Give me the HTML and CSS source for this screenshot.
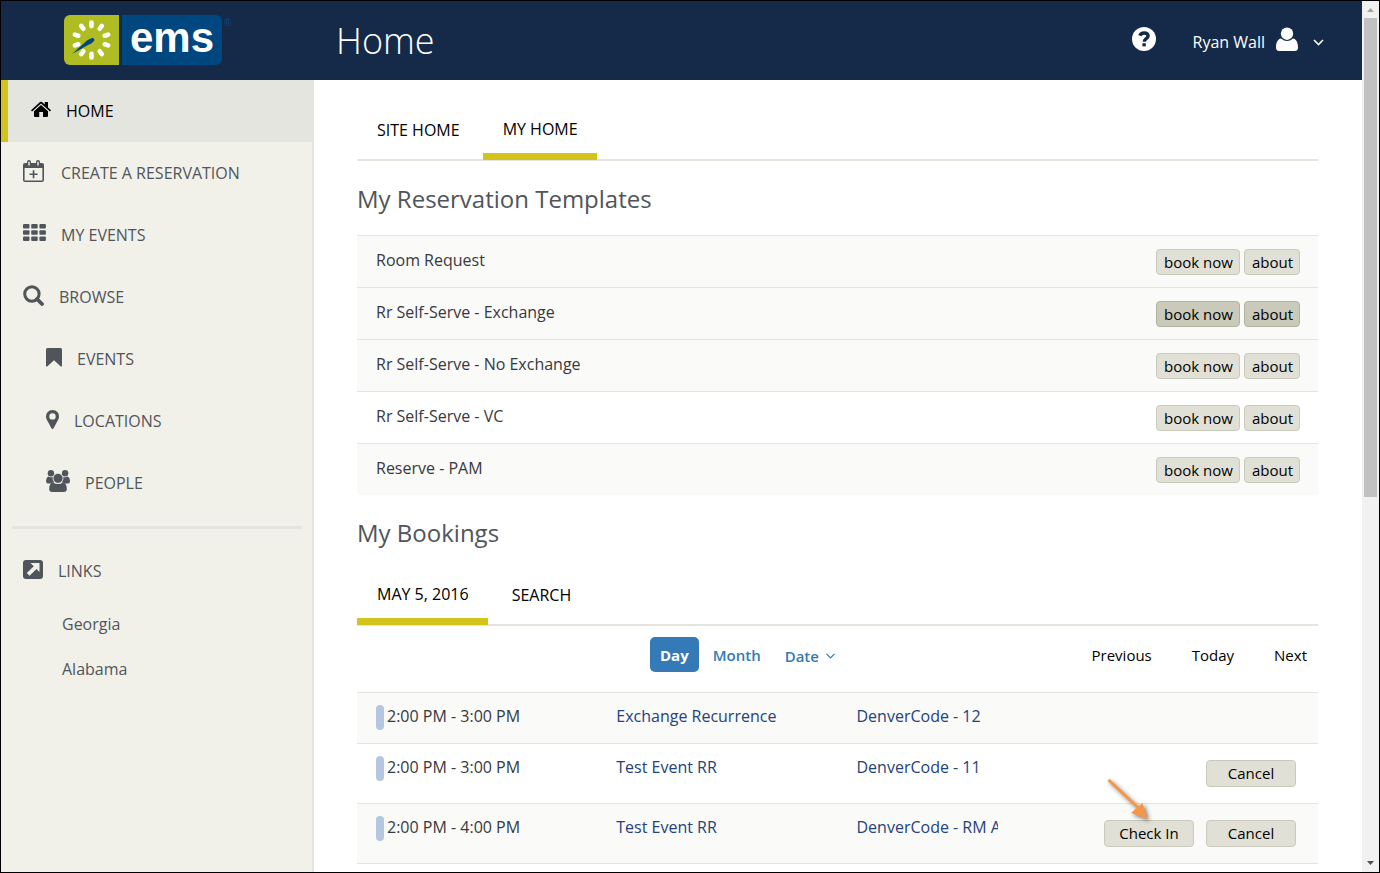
FILE: index.html
```html
<!DOCTYPE html>
<html lang="en">
<head>
<meta charset="utf-8">
<title>Home</title>
<link rel="stylesheet" href="styles.css">
</head>
<body>
<div class="window">
  <div class="app">
    <header class="header">
      <a class="logo" href="#" aria-label="ems">
        <svg width="170" height="52" viewBox="0 0 170 52">
          <path d="M7 1H56V51H7a6 6 0 0 1-6-6V7a6 6 0 0 1 6-6z" fill="#afbd22"/>
          <path d="M59 1H153a6 6 0 0 1 6 6V45a6 6 0 0 1-6 6H59z" fill="#00467f"/>
          <g stroke="#fff" stroke-width="4.6" stroke-linecap="round">
            <path id="ray" d="M28.500 8.500v3.600"/>
            <use href="#ray" transform="rotate(36 28.500 26)"/>
            <use href="#ray" transform="rotate(72 28.500 26)"/>
            <use href="#ray" transform="rotate(108 28.500 26)"/>
            <use href="#ray" transform="rotate(144 28.500 26)"/>
            <use href="#ray" transform="rotate(180 28.500 26)"/>
            <use href="#ray" transform="rotate(216 28.500 26)"/>
            <use href="#ray" transform="rotate(252 28.500 26)"/>
            <use href="#ray" transform="rotate(288 28.500 26)"/>
            <use href="#ray" transform="rotate(324 28.500 26)"/>
          </g>
          <path d="M9 40 24 26.500Q28 23.500 30 24Q32.500 25.500 30.500 27.500Q29 29.500 25 31z" fill="#00467f"/>
          <text class="logo-word" x="67" y="38">ems</text>
          <text class="logo-mark" x="161" y="12">®</text>
        </svg>
      </a>
      <h1 class="title">Home</h1>
      <div class="user-area">
        <button class="icon-button" aria-label="Help">
          <svg width="24" height="24" viewBox="0 0 24 24"><circle cx="12" cy="12" r="12" fill="#fff"/><path d="M7.800 8.600C8.600 6.700 10.100 6 12 6c2.500 0 4.100 1.300 4.100 3.100 0 2.600-3.900 2.700-3.900 5.600" fill="none" stroke="#152948" stroke-width="3.400"/><path d="M10.400 16.200h3.400v3.200h-3.400z" fill="#152948"/></svg>
        </button>
        <button class="user-button">Ryan Wall
          <svg width="22" height="25" viewBox="0 0 22 25" fill="#fff"><circle cx="11" cy="6.700" r="6.200"/><path d="M5 11.500Q11 16.500 17 11.500C20.500 12 22 16 22 20.500Q22 24 18.500 24H3.500Q0 24 0 20.500C0 16 1.500 12 5 11.500z"/></svg>
          <svg class="user-caret" width="11" height="7" viewBox="0 0 11 7"><path d="M1 1l4.500 4.500L10 1" fill="none" stroke="#fff" stroke-width="1.600"/></svg>
        </button>
      </div>
    </header>
    <div class="body">
      <nav class="sidebar">
        <a class="nav-item active" href="#"><svg width="20" height="17" viewBox="0 0 20 17"><path d="M0 9.300 9 1.100q1-.8 2 0l2.800 2.500V1H17v5.500l3 2.800-1 1.200-9-7.900-9 7.900z"/><path d="M3 10.200l7-6.200 7 6.200V15q0 1-1 1h-4v-5H8.200v5H4q-1 0-1-1z"/></svg>HOME</a>
        <a class="nav-item" href="#"><svg width="23" height="23" viewBox="0 0 23 23"><path fill-rule="evenodd" d="M2 3h2V2q0-2 2-2t2 2v1h5V2q0-2 2-2t2 2v1h2q2 0 2 2v15q0 2-2 2H2q-2 0-2-2V5q0-2 2-2zM1.600 8v12q0 .5.500.5h16.800q.500 0 .500-.5V8zM5.300 2v3.500h1.400V2q-.7-1-1.400 0zM14.300 2v3.500h1.400V2q-.7-1-1.400 0z"/><path d="M9.700 10.300h1.700v3.200h3.200v1.600h-3.200v3.200H9.700v-3.200H6.500v-1.600h3.200z"/></svg>CREATE A RESERVATION</a>
        <a class="nav-item" href="#"><svg class="raised" width="23" height="17" viewBox="0 0 23 17"><g id="gridrow"><rect width="6.500" height="4.600" rx="1"/><rect x="8.200" width="6.500" height="4.600" rx="1"/><rect x="16.400" width="6.500" height="4.600" rx="1"/></g><use href="#gridrow" y="6.200"/><use href="#gridrow" y="12.400"/></svg>MY EVENTS</a>
        <a class="nav-item" href="#"><svg width="21" height="21" viewBox="0 0 21 21" fill="none" stroke="#50555c"><circle cx="8.900" cy="9" r="7.200" stroke-width="3"/><path d="M14 14l5 5" stroke-width="3.800" stroke-linecap="round"/></svg>BROWSE</a>
        <a class="nav-item sub" href="#"><svg width="16" height="19" viewBox="0 0 16 19"><path d="M0 1.500Q0 0 1.500 0h13Q16 0 16 1.500V18q-.5 1-1.500.3L8 12.300l-6.500 6Q.5 19 0 18z"/></svg>EVENTS</a>
        <a class="nav-item sub" href="#"><svg width="13" height="19" viewBox="0 0 13 19"><path fill-rule="evenodd" d="M6.500 0Q13 .5 13 6.500q0 1.500-.6 2.800L7.600 18.200q-1.100 1.500-2.200 0L.6 9.300Q0 8 0 6.500.2.500 6.500 0zM6.500 3.200a3.200 3.200 0 1 0 0 6.400 3.200 3.200 0 1 0 0-6.400z"/></svg>LOCATIONS</a>
        <a class="nav-item sub" href="#"><svg width="24" height="22" viewBox="0 0 24 22"><circle cx="4.900" cy="3.200" r="3.200"/><circle cx="19.100" cy="3.200" r="3.200"/><path d="M2 6.500q3 1.300 4.700.2-.4 3.800 1.600 5.800-2.500 0-3.300 1H2Q0 13.500 0 11 0 8 2 6.500zM22 6.500q-3 1.300-4.700.2.400 3.800-1.600 5.800 2.500 0 3.300 1h3q2 0 2-2.500 0-3-2-4.500z"/><circle cx="12" cy="8.300" r="4.900" stroke="#f2f1e9" stroke-width=".6"/><path d="M7 12.500q5 3 10 0 3.800.5 3.800 6.500 0 3-3 3H6.200q-3 0-3-3 0-6 3.800-6.500z"/></svg>PEOPLE</a>
        <hr class="divider">
        <a class="nav-item" href="#"><svg width="20" height="19" viewBox="0 0 20 19"><rect width="20" height="19" rx="3"/><path d="M7.500 3H16.500V12L13.500 9 6.500 15.800 3.800 13 10.800 6.200z" fill="#f2f1e9"/></svg>LINKS</a>
        <a class="nav-link" href="#">Georgia</a>
        <a class="nav-link" href="#">Alabama</a>
      </nav>
      <main class="main">
        <div class="tabs">
          <button class="tab">SITE HOME</button>
          <button class="tab selected">MY HOME</button>
        </div>
        <h2 class="section-title">My Reservation Templates</h2>
        <table class="list templates">
          <tbody>
            <tr class="shaded"><td>Room Request</td><td class="actions"><button class="btn">book now</button><button class="btn">about</button></td></tr>
            <tr class="shaded hover"><td>Rr Self-Serve - Exchange</td><td class="actions"><button class="btn">book now</button><button class="btn">about</button></td></tr>
            <tr class="shaded"><td>Rr Self-Serve - No Exchange</td><td class="actions"><button class="btn">book now</button><button class="btn">about</button></td></tr>
            <tr><td>Rr Self-Serve - VC</td><td class="actions"><button class="btn">book now</button><button class="btn">about</button></td></tr>
            <tr class="shaded"><td>Reserve - PAM</td><td class="actions"><button class="btn">book now</button><button class="btn">about</button></td></tr>
          </tbody>
        </table>
        <h2 class="section-title bookings-title">My Bookings</h2>
        <div class="tabs">
          <button class="tab selected">MAY 5, 2016</button>
          <button class="tab">SEARCH</button>
        </div>
        <div class="toolbar">
          <div class="views">
            <button class="view current">Day</button>
            <button class="view">Month</button>
            <button class="view date">Date <svg width="9" height="6" viewBox="0 0 9 6"><path d="M.5.8l4 4 4-4" fill="none" stroke="#337ab7" stroke-width="1.200"/></svg></button>
          </div>
          <div class="pager">
            <button class="page">Previous</button>
            <button class="page">Today</button>
            <button class="page">Next</button>
          </div>
        </div>
        <table class="list bookings">
          <colgroup><col class="col-time"><col class="col-event"><col class="col-place"><col></colgroup>
          <tbody>
            <tr class="shaded"><td><span class="time">2:00 PM - 3:00 PM</span></td><td><a href="#">Exchange Recurrence</a></td><td class="place"><a href="#">DenverCode - 12</a></td><td class="actions"></td></tr>
            <tr><td><span class="time">2:00 PM - 3:00 PM</span></td><td><a href="#">Test Event RR</a></td><td class="place"><a href="#">DenverCode - 11</a></td><td class="actions"><button class="btn wide">Cancel</button></td></tr>
            <tr class="shaded"><td><span class="time">2:00 PM - 4:00 PM</span></td><td><a href="#">Test Event RR</a></td><td class="place"><a href="#">DenverCode - RM A</a></td><td class="actions"><span class="check-in"><button class="btn wide">Check In</button><svg class="pointer" width="56" height="54" viewBox="0 0 56 54"><g fill="#f79646"><path d="M5.500 2.800 36 31.500l-2 2L3.500 5z"/><path d="M38.500 27 43.500 43 27 37z"/></g></svg></span><button class="btn wide">Cancel</button></td></tr>
            <tr><td></td><td></td><td></td><td></td></tr>
          </tbody>
        </table>
      </main>
    </div>
  </div>
  <div class="scrollbar" aria-hidden="true">
    <svg class="arrow" width="17" height="17" viewBox="0 0 17 17"><path d="M5 11 8.500 7 12 11z" fill="#a3a3a3"/></svg>
    <div class="thumb"></div>
    <div class="track"></div>
    <svg class="arrow" width="17" height="17" viewBox="0 0 17 17"><path d="M5 6 8.500 10 12 6z" fill="#505050"/></svg>
  </div>
</div>
</body>
</html>
```
FILE: styles.css
```css
* { box-sizing: border-box; }

body {
  margin: 0;
  font: 16px/24px "Open Sans", "Noto Sans", sans-serif;
  color: #36393d;
}

button {
  font: inherit;
  color: inherit;
  border: 0;
  padding: 0;
  background: none;
  cursor: pointer;
}

a { color: inherit; text-decoration: none; }

.window {
  display: flex;
  height: 100vh;
  border: 1px solid #000;
  overflow: hidden;
}

.app {
  flex: 1;
  min-width: 0;
  display: flex;
  flex-direction: column;
  overflow: hidden;
}

/* Header */
.header {
  flex: none;
  display: flex;
  align-items: center;
  height: 79px;
  padding: 0 38px 0 62px;
  background: #152948;
  color: #fff;
}

.logo { width: 273px; height: 52px; margin-bottom: 2px; }
.logo svg { display: block; }
.logo-word { font: bold 42px "Liberation Sans", Arial, sans-serif; fill: #fff; }
.logo-mark { font: 10px "Liberation Sans", Arial, sans-serif; fill: #0a4a85; }

.title { margin: 0; font-size: 36px; line-height: 48px; font-weight: 300; }

.user-area { margin-left: auto; display: flex; align-items: center; gap: 37px; }
.icon-button { height: 28px; }
.icon-button svg { display: block; margin-bottom: 4px; }
.user-button { display: flex; align-items: center; gap: 11px; padding-top: 2px; }
.user-button svg { margin-bottom: 4px; }
.user-button .user-caret { margin: 2px 0 0 4px; }

/* Sidebar */
.body { flex: 1; min-height: 0; display: flex; }

.sidebar {
  flex: none;
  width: 313px;
  background: #f2f1e9;
  border-right: 2px solid #e4e5df;
  color: #50555c;
}

.nav-item {
  display: flex;
  align-items: center;
  gap: 15px;
  height: 62px;
  padding-left: 22px;
  fill: #50555c;
}

.nav-item svg { margin-bottom: 4px; }
.nav-item svg.raised { margin-bottom: 6px; }
.nav-item.sub { padding-left: 45px; }

.nav-item.active {
  padding-left: 23px;
  border-left: 7px solid #d3c41c;
  background: #e4e5df;
  color: #000;
  fill: #000;
}

.divider { height: 3px; margin: 12px 10px 11px 11px; border: 0; background: #e4e5df; }

.nav-link { display: block; padding-left: 61px; line-height: 45px; }

/* Content */
.main { flex: 1; min-width: 0; padding: 18px 44px 0 43px; overflow: hidden; }

.tabs {
  display: flex;
  gap: 4px;
  height: 63px;
  border-bottom: 2px solid #e4e5df;
}

.tab { height: 62px; padding: 2px 19px 0 20px; color: #000; }
.tab.selected { padding-top: 7px; border-bottom: 7px solid #d3c41c; }

.section-title {
  margin: 0;
  padding: 22px 0 20px;
  font-size: 24px;
  line-height: 32px;
  font-weight: 400;
  color: #50555c;
}

.bookings-title { padding-bottom: 14px; }

.list { width: 100%; border-collapse: separate; border-spacing: 0; }

.list td {
  padding: 12px 0 0 19px;
  border-top: 1px solid #e4e5df;
  vertical-align: top;
  white-space: nowrap;
}

.shaded td { background: #fafaf8; }

.templates tr { height: 52px; }
.templates .actions { padding: 13px 18px 0 0; }

.list .actions { text-align: right; font-size: 0; }

.btn {
  height: 26px;
  padding: 0 6px 0 7px;
  border: 1px solid #c9cabb;
  border-radius: 4px;
  background: #e0e0d6;
  color: #000;
  font-size: 15px;
  line-height: 24px;
}

.btn + .btn { margin-left: 4px; }
.hover .btn { background: #c9cab9; border-color: #b2b39e; }

/* Bookings */
.toolbar {
  display: flex;
  justify-content: space-between;
  align-items: center;
  padding: 11px 11px 20px 293px;
  font-size: 15px;
}

.views, .pager { display: flex; align-items: center; }
.view { height: 35px; padding: 0 10px; color: #337ab7; font-weight: 600; }
.view.current { margin-right: 4px; border-radius: 5px; background: #337ab7; color: #fff; font-weight: 700; }
.view.date { display: flex; align-items: center; gap: 7px; padding: 2px 14px 0; }
.pager { gap: 40px; color: #000; }

.bookings { table-layout: fixed; }
.bookings td { height: 60px; padding-top: 11px; }
.bookings tr:first-child td { height: 51px; }
.bookings a { color: #24427c; }
.bookings .actions { padding: 16px 22px 0 0; }
.bookings td.place { overflow: hidden; }

.col-time, .col-event { width: 25%; }
.col-place { width: 160px; }

.time { display: flex; align-items: flex-start; gap: 3px; height: 24px; }
.time::before { content: ""; width: 8px; height: 25px; margin-top: 1px; border-radius: 4px; background: #b4c6e0; }

.btn.wide { width: 90px; height: 27px; padding: 0 0 2px; }
.check-in { position: relative; display: inline-block; margin-right: 12px; }

/* Callout arrow laid over the Check In button */
.pointer {
  position: absolute;
  left: 0;
  top: -44px;
  filter: drop-shadow(2px 2px 2px rgba(0, 0, 0, 0.5));
  pointer-events: none;
}

/* Scrollbar */
.scrollbar {
  flex: none;
  display: flex;
  flex-direction: column;
  width: 17px;
  background: #f1f1f1;
}

.arrow { flex: none; display: block; }
.thumb { flex: 479; margin: 0 2px; background: #c1c1c1; }
.track { flex: 358; }
```
